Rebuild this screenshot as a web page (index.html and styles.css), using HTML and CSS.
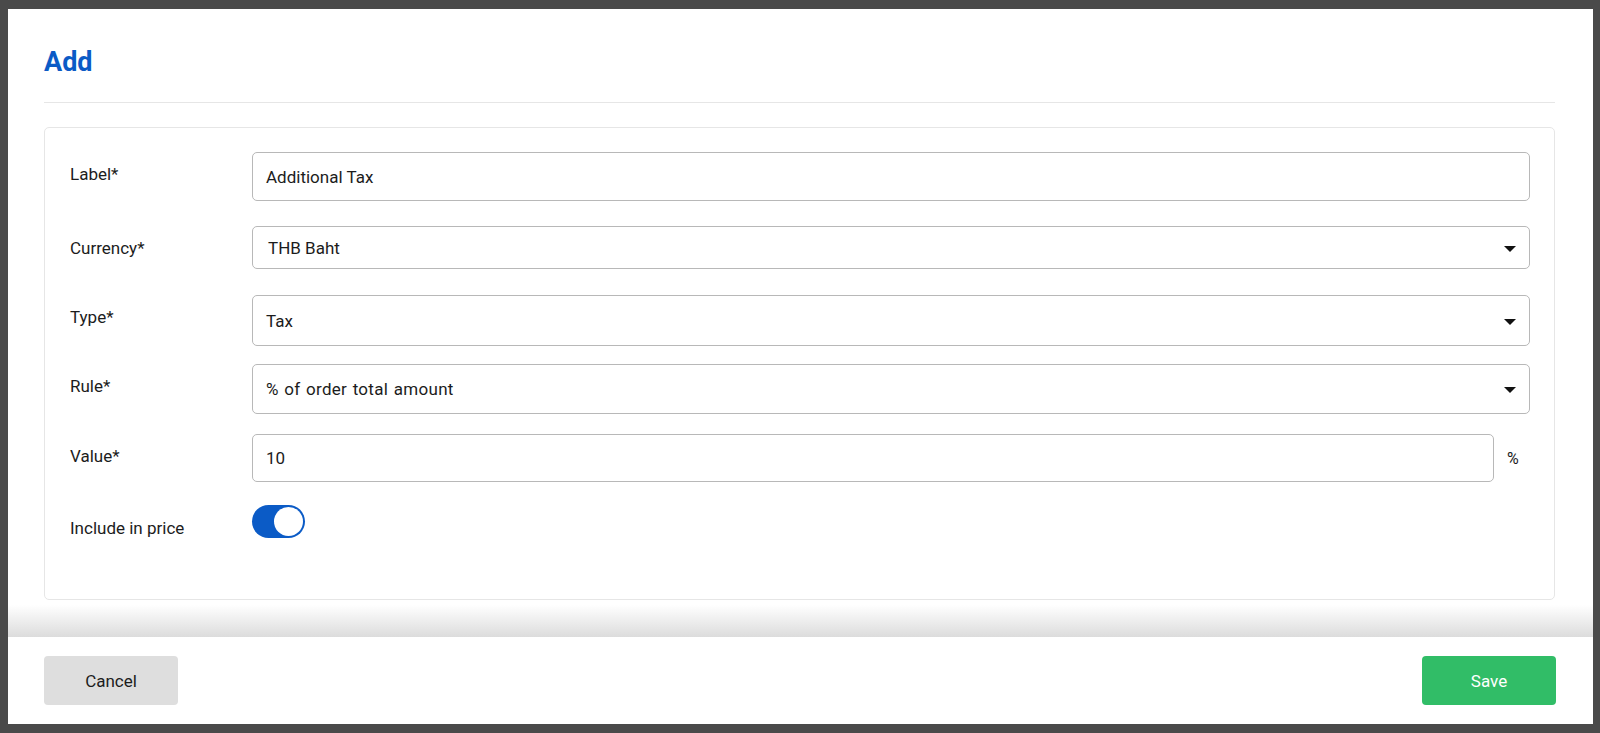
FILE: index.html
```html
<!DOCTYPE html>
<html lang="en">
<head>
<meta charset="utf-8">
<title>Add</title>
<link rel="stylesheet" href="styles.css">
</head>
<body>
<div class="panel">
  <div class="main">
    <h1 class="title">Add</h1>
    <div class="divider"></div>
    <div class="card">
      <div class="field field-1">
        <label class="field-label">Label*</label>
        <div class="control">
          <div class="input h-49">Additional Tax</div>
        </div>
      </div>
      <div class="field field-2">
        <label class="field-label">Currency*</label>
        <div class="control">
          <div class="input select h-43"><span class="sel-text">THB Baht</span><span class="caret"></span></div>
        </div>
      </div>
      <div class="field field-3">
        <label class="field-label">Type*</label>
        <div class="control">
          <div class="input select h-51"><span>Tax</span><span class="caret"></span></div>
        </div>
      </div>
      <div class="field field-4">
        <label class="field-label">Rule*</label>
        <div class="control">
          <div class="input select h-50"><span class="wide">% of order total amount</span><span class="caret"></span></div>
        </div>
      </div>
      <div class="field field-5">
        <label class="field-label">Value*</label>
        <div class="control with-unit">
          <div class="input h-48">10</div>
          <span class="unit">%</span>
        </div>
      </div>
      <div class="field field-6">
        <label class="field-label">Include in price</label>
        <div class="control">
          <div class="switch" role="switch" aria-checked="true"><span class="knob"></span></div>
        </div>
      </div>
    </div>
  </div>
  <div class="footer">
    <button class="btn btn-cancel">Cancel</button>
    <button class="btn btn-save">Save</button>
  </div>
</div>
</body>
</html>
```

FILE: styles.css
```css
* { box-sizing: border-box; }

html, body {
  margin: 0;
  height: 100%;
}

body {
  background: #4a4a4a;
  font-family: Roboto, "Liberation Sans", Arial, sans-serif;
  color: #1c1c1c;
  padding: 9px 7px 9px 8px;
}

.panel {
  background: #fff;
  height: 715px;
  display: flex;
  flex-direction: column;
}

.main {
  flex: 1;
  padding: 38px 38px 0 36px;
  background: linear-gradient(to bottom, #fff 0, #fff calc(100% - 32px), #f6f6f6 calc(100% - 24px), #dcdcdc 100%);
}

.title {
  margin: 0;
  font-size: 27px;
  line-height: 30px;
  font-weight: 700;
  color: #0b5bc6;
}

.divider {
  margin-top: 25px;
  height: 1px;
  background: #e6e6e6;
}

.card {
  margin-top: 24px;
  border: 1px solid #e6e6e6;
  border-radius: 5px;
  background: #fff;
  padding: 24px 24px 61px 25px;
}

.field {
  display: flex;
  align-items: flex-start;
}

.field-1 { height: 74px; }
.field-2 { height: 69px; }
.field-3 { height: 69px; }
.field-4 { height: 70px; }
.field-5 { height: 71px; }

.field-label {
  width: 182px;
  flex: none;
  font-size: 17px;
  line-height: 20px;
  padding-top: 12px;
  color: #1c1c1c;
}

.field-6 .field-label { padding-top: 13px; }

.control {
  flex: 1;
  display: flex;
  align-items: center;
}

.input {
  flex: 1;
  display: flex;
  align-items: center;
  border: 1px solid #b8b8b8;
  border-radius: 5px;
  padding: 0 13px 0 13px;
  font-size: 17px;
  color: #1c1c1c;
  background: #fff;
}

.h-49 { height: 49px; }
.h-43 { height: 43px; }
.h-51 { height: 51px; }
.h-50 { height: 50px; }
.h-48 { height: 48px; }

.select {
  justify-content: space-between;
}

.sel-text { padding-left: 2px; }

.wide { letter-spacing: 0.3px; word-spacing: 1px; }

.caret {
  width: 0;
  height: 0;
  border-left: 6px solid transparent;
  border-right: 6px solid transparent;
  border-top: 6px solid #111;
  margin-top: 2px;
}

.unit {
  width: 36px;
  flex: none;
  padding-left: 13px;
  font-size: 16px;
  color: #1c1c1c;
}

.switch {
  position: relative;
  width: 53px;
  height: 33px;
  border-radius: 17px;
  background: #0b5bc6;
}

.knob {
  position: absolute;
  top: 2px;
  right: 2px;
  width: 29px;
  height: 29px;
  border-radius: 50%;
  background: #fff;
}

.footer {
  height: 87px;
  flex: none;
  display: flex;
  align-items: center;
  justify-content: space-between;
  padding: 0 37px 0 36px;
  background: #fff;
}

.btn {
  width: 134px;
  height: 49px;
  border: none;
  border-radius: 4px;
  font-family: Roboto, "Liberation Sans", Arial, sans-serif;
  font-size: 17px;
}

.btn-cancel {
  background: #dedede;
  color: #1c1c1c;
}

.btn-save {
  background: #31bd67;
  color: #fff;
}
```
